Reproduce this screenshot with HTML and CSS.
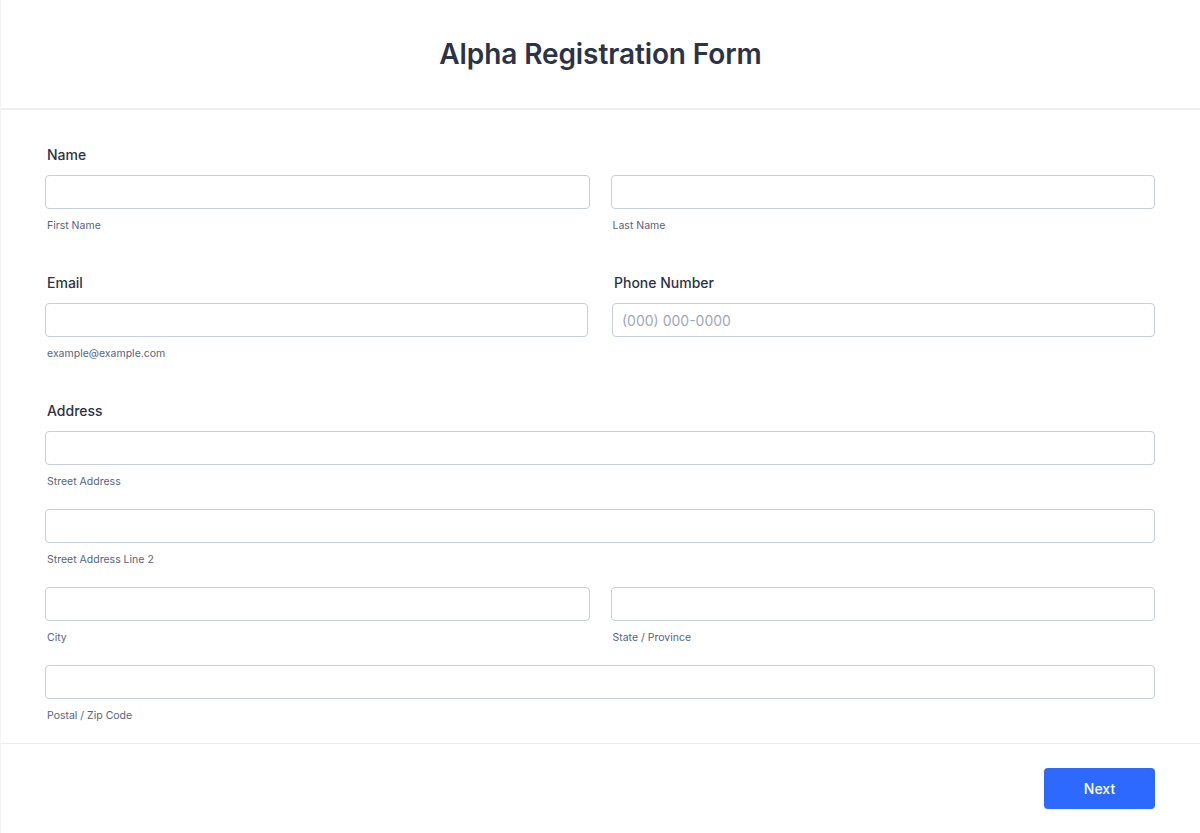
FILE: index.html
```html
<!DOCTYPE html>
<html>
<head>
	<title>Alpha Registration Form</title>
	<meta charset="UTF-8">

	<link rel="stylesheet" href="styles.css">
</head>
<body>

    <div class="form">
        <div class="header">
            <h1>Alpha Registration Form</h1>
        </div>

        <div class="content">

            <div class="field">
                <label class="label">Name</label>
                <div class="row">
                    <div class="col">
                        <input class="input" type="text" />
                        <span class="sublabel">First Name</span>
                    </div>
                    <div class="col">
                        <input class="input" type="text" />
                        <span class="sublabel">Last Name</span>
                    </div>
                </div>
            </div>

            <div class="row row-wide">
                <div class="field col">
                    <label class="label">Email</label>
                    <input class="input" type="text" />
                    <span class="sublabel">example@example.com</span>
                </div>
                <div class="field col">
                    <label class="label">Phone Number</label>
                    <input class="input" type="text" placeholder="(000) 000-0000" />
                </div>
            </div>

            <div class="field">
                <label class="label">Address</label>
                <div class="stack">
                    <div class="col">
                        <input class="input" type="text" />
                        <span class="sublabel">Street Address</span>
                    </div>
                    <div class="col">
                        <input class="input" type="text" />
                        <span class="sublabel">Street Address Line 2</span>
                    </div>
                    <div class="row">
                        <div class="col">
                            <input class="input" type="text" />
                            <span class="sublabel">City</span>
                        </div>
                        <div class="col">
                            <input class="input" type="text" />
                            <span class="sublabel">State / Province</span>
                        </div>
                    </div>
                    <div class="col">
                        <input class="input" type="text" />
                        <span class="sublabel">Postal / Zip Code</span>
                    </div>
                </div>
            </div>

        </div>

        <div class="footer">
            <button class="btn" type="button">Next</button>
        </div>
    </div>

</body>
</html>
```

FILE: styles.css
```css
* {
    box-sizing: border-box;
    font-family: Inter, "Noto Sans", Arial, sans-serif;
}
body {
    margin: 0;
    background-color: #fff;
}
.form {
    display: flex;
    flex-direction: column;
    border-left: 1px solid #f3f3f5;
    min-height: 833px;
}
.header {
    height: 110px;
    display: flex;
    justify-content: center;
    align-items: center;
    border-bottom: 2px solid #eceef2;
}
h1 {
    margin: 0;
    font-size: 28px;
    font-weight: 600;
    color: #2c3345;
    letter-spacing: -0.1px;
}
.content {
    display: flex;
    flex-direction: column;
    gap: 39px;
    padding: 35px 45px 19px 44px;
    border-bottom: 1px solid #eceef2;
}
.field {
    display: flex;
    flex-direction: column;
}
.label {
    font-size: 14px;
    font-weight: 500;
    line-height: 20px;
    color: #2c3345;
    margin-bottom: 10px;
    padding-left: 2px;
}
.row {
    display: grid;
    grid-template-columns: 1fr 1fr;
    column-gap: 21px;
}
.row-wide {
    column-gap: 24px;
}
.stack {
    display: flex;
    flex-direction: column;
    gap: 19px;
}
.col {
    display: flex;
    flex-direction: column;
    min-width: 0;
}
.input {
    width: 100%;
    height: 34px;
    margin: 0;
    border: 1px solid #c9cedb;
    border-radius: 4px;
    padding: 0 9px;
    font-size: 14px;
    color: #2c3345;
    background-color: #fff;
}
.input::placeholder {
    color: #a0a7b9;
}
.sublabel {
    margin-top: 9px;
    font-size: 10.5px;
    line-height: 16px;
    color: #57647e;
    padding-left: 2px;
}
.footer {
    display: flex;
    justify-content: flex-end;
    padding: 24px 45px 24px 44px;
}
.btn {
    width: 111px;
    height: 41px;
    border: none;
    border-radius: 4px;
    background-color: #2e69ff;
    color: #fff;
    font-size: 14px;
    font-weight: 500;
}
```
